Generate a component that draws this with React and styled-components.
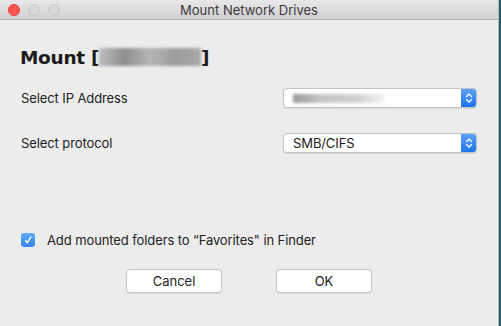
import React from "react";
import styled, { createGlobalStyle } from "styled-components";

const GlobalStyle = createGlobalStyle`
  html, body {
    margin: 0;
    padding: 0;
    background: #1f5f63;
  }
  body {
    font-family: "Inter", "Liberation Sans", sans-serif;
    -webkit-font-smoothing: antialiased;
  }
`;

const Window = styled.div`
  width: 498px;
  height: 326px;
  background: #ececec;
  border-right: 1px solid #b8b8b8;
  display: flex;
  flex-direction: column;
  overflow: hidden;
`;

const TitleBar = styled.div`
  height: 20px;
  flex-shrink: 0;
  background: linear-gradient(#e9e7e9, #d2d0d2);
  border-bottom: 1px solid #b2b0b2;
  display: flex;
  align-items: center;
  position: relative;
  padding-left: 8px;
  box-sizing: border-box;
`;

const Lights = styled.div`
  display: flex;
  gap: 8px;
`;

const Light = styled.span`
  width: 12px;
  height: 12px;
  border-radius: 50%;
  box-sizing: border-box;
  background: ${(p) => (p.$red ? "#fc5753" : "#d9d7d9")};
  border: 1px solid ${(p) => (p.$red ? "#df3f3b" : "#c7c5c7")};
`;

const Title = styled.div`
  position: absolute;
  left: 0;
  right: 0;
  text-align: center;
  font-size: 13px;
  color: #3c3a3c;
  pointer-events: none;
`;

const Content = styled.div`
  flex: 1;
  display: flex;
  flex-direction: column;
  padding: 26px 21px 0 21px;
  letter-spacing: -0.1px;
`;

const Heading = styled.h1`
  margin: 0 0 0 -1px;
  font-family: "DejaVu Sans", sans-serif;
  font-weight: bold;
  font-size: 18.5px;
  letter-spacing: -0.3px;
  color: #1b1b1b;
  display: flex;
  align-items: center;
  height: 22px;
`;

const Redacted = styled.span`
  display: inline-block;
  width: ${(p) => p.$w}px;
  height: ${(p) => p.$h}px;
  background: ${(p) => p.$bg};
  filter: blur(1.5px);
`;

const Form = styled.div`
  display: flex;
  flex-direction: column;
  gap: 25px;
  margin-top: 20px;
`;

const Row = styled.div`
  display: flex;
  align-items: center;
  justify-content: space-between;
  height: 20px;
`;

const Label = styled.span`
  font-size: 13px;
  color: #222;
`;

const Select = styled.div`
  width: 194px;
  height: 20px;
  box-sizing: border-box;
  background: #fff;
  border: 1px solid #c3c3c3;
  border-radius: 4px;
  display: flex;
  align-items: center;
  overflow: hidden;
  box-shadow: 0 0.5px 1px rgba(0, 0, 0, 0.08);
`;

const SelectValue = styled.span`
  flex: 1;
  padding-left: 9px;
  font-size: 13px;
  color: #222;
  display: flex;
  align-items: center;
`;

const Stepper = styled.span`
  width: 16px;
  height: 20px;
  margin: -1px -1px -1px 0;
  background: linear-gradient(#5fa4f8, #1a72f0);
  display: flex;
  align-items: center;
  justify-content: center;
  border-radius: 0 4px 4px 0;
`;

const CheckRow = styled.label`
  display: flex;
  align-items: center;
  gap: 12px;
  margin-top: 79px;
  font-size: 13px;
  color: #222;
`;

const CheckBox = styled.span`
  width: 14px;
  height: 14px;
  border-radius: 3px;
  background: linear-gradient(#62a8f8, #2f84f4);
  display: flex;
  align-items: center;
  justify-content: center;
`;

const Buttons = styled.div`
  display: flex;
  gap: 54px;
  margin-top: 21px;
  padding-left: 105px;
`;

const Button = styled.button`
  width: 96px;
  height: 24px;
  box-sizing: border-box;
  background: #fff;
  border: 1px solid #c6c6c6;
  border-radius: 4px;
  font-family: inherit;
  font-size: 13px;
  color: #222;
  padding: 0;
  box-shadow: 0 0.5px 1px rgba(0, 0, 0, 0.08);
`;

const Arrows = () => (
  <svg width="8" height="12" viewBox="0 0 8 12" fill="none" stroke="#fff" strokeWidth="1.3" strokeLinecap="round" strokeLinejoin="round">
    <path d="M1.5 4.5 L4 2 L6.5 4.5" />
    <path d="M1.5 7.5 L4 10 L6.5 7.5" />
  </svg>
);

const Check = () => (
  <svg width="10" height="10" viewBox="0 0 10 10" fill="none" stroke="#fff" strokeWidth="1.4" strokeLinecap="round" strokeLinejoin="round">
    <path d="M2.5 5.5 L4.3 7.8 L7.8 2.2" />
  </svg>
);

const App = () => (
  <>
    <GlobalStyle />
    <Window>
      <TitleBar>
        <Lights>
          <Light $red />
          <Light />
          <Light />
        </Lights>
        <Title>Mount Network Drives</Title>
      </TitleBar>
      <Content>
        <Heading>
          Mount&nbsp;[
          <Redacted $w={102} $h={18} $bg="linear-gradient(90deg, #bdbdbd, #8e8e8e 25%, #b5b5b5 50%, #9c9c9c 75%, #a8a8a8)" />
          ]
        </Heading>
        <Form>
          <Row>
            <Label>Select IP Address</Label>
            <Select>
              <SelectValue>
                <Redacted $w={92} $h={9} $bg="linear-gradient(90deg, #9a9a9a, #c6c6c6 30%, #d0d0d0 70%, #f4f4f4)" />
              </SelectValue>
              <Stepper><Arrows /></Stepper>
            </Select>
          </Row>
          <Row>
            <Label>Select protocol</Label>
            <Select>
              <SelectValue>SMB/CIFS</SelectValue>
              <Stepper><Arrows /></Stepper>
            </Select>
          </Row>
        </Form>
        <CheckRow>
          <CheckBox><Check /></CheckBox>
          Add mounted folders to “Favorites" in Finder
        </CheckRow>
        <Buttons>
          <Button>Cancel</Button>
          <Button>OK</Button>
        </Buttons>
      </Content>
    </Window>
  </>
);

export default App;
